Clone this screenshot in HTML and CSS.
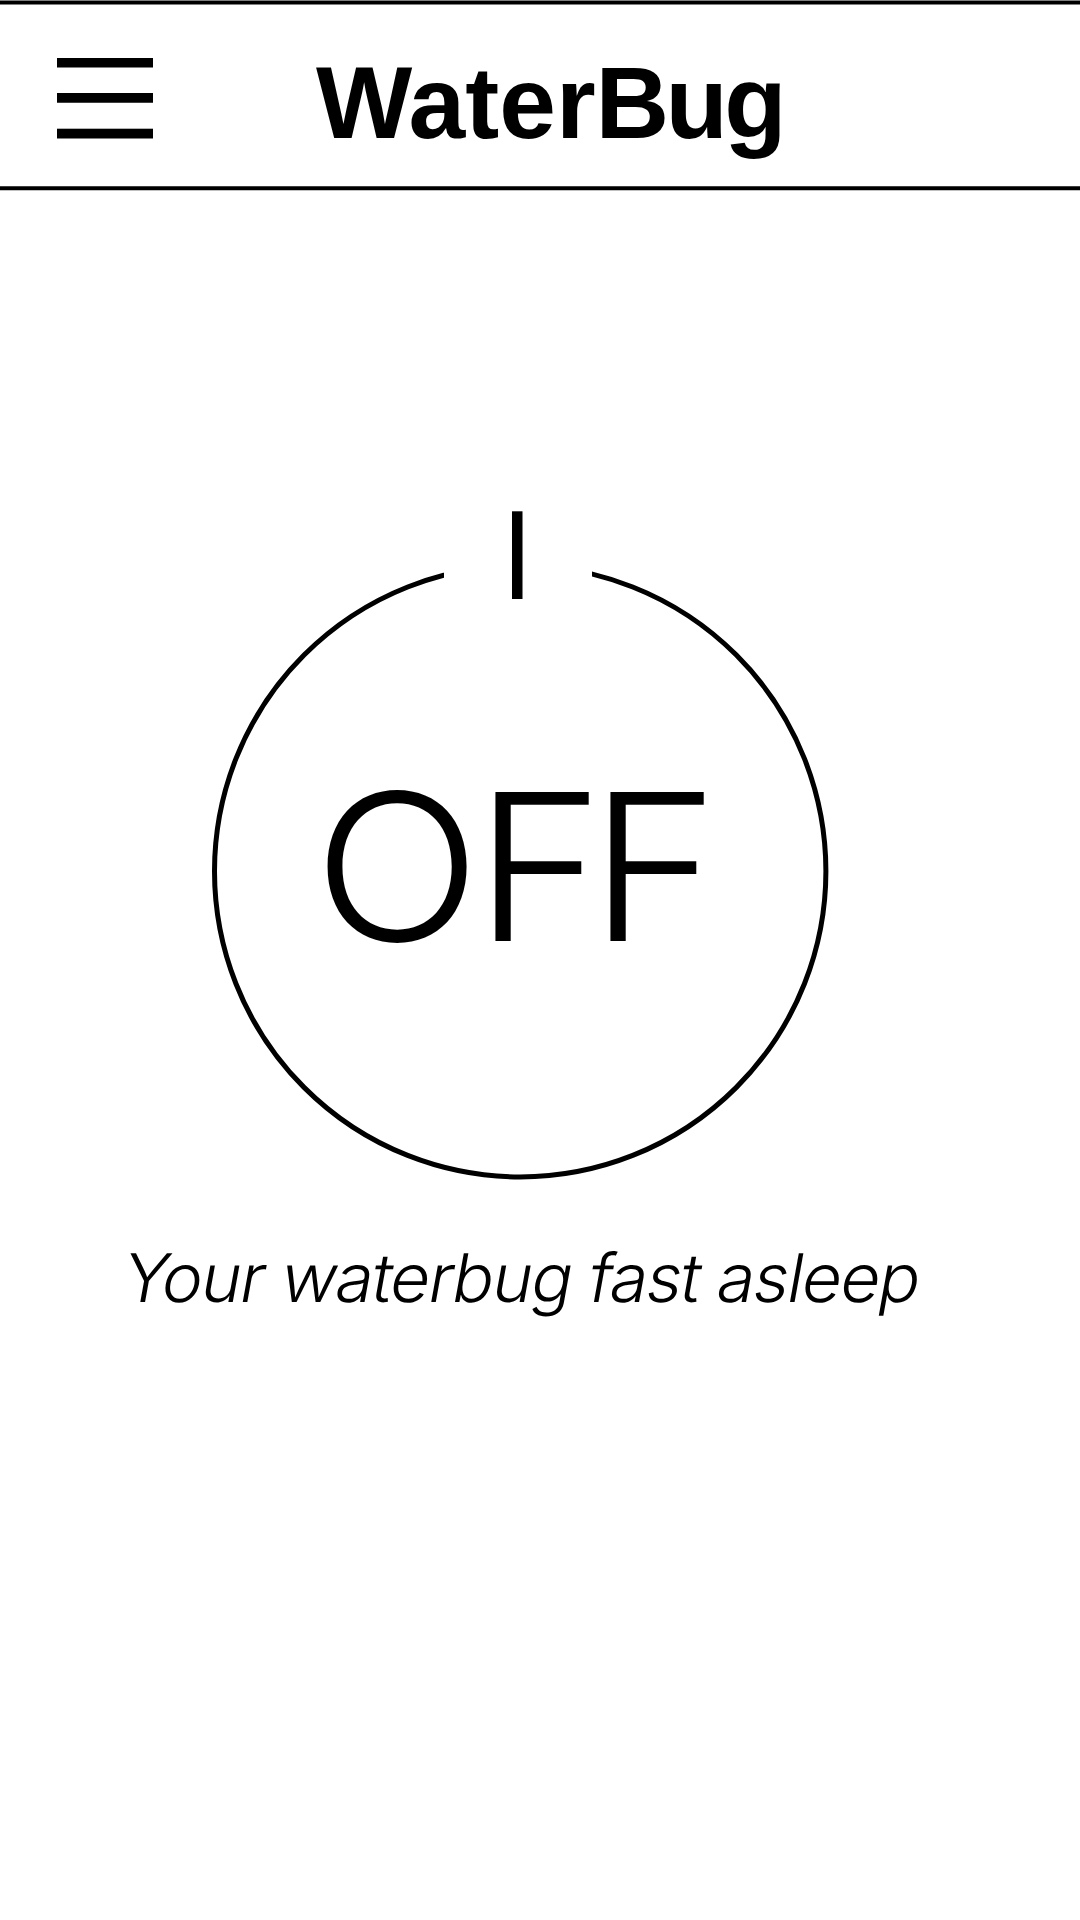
FILE: index.html
```html
<!DOCTYPE html>
<html lang="en">
<head>
<meta charset="utf-8">
<title>WaterBug</title>
<link rel="stylesheet" href="styles.css">
</head>
<body>
<div class="app">
  <svg class="rule" viewBox="0 0 1080 5"><rect y="0.5" width="1080" height="4"/></svg>
  <header class="header">
    <svg class="menu" viewBox="0 0 96 81" role="img" aria-label="Menu">
      <rect y="0" width="96" height="9.5"/>
      <rect y="35" width="96" height="9.75"/>
      <rect y="70.7" width="96" height="9.8"/>
    </svg>
    <h1 class="title">Water<span class="title-end">Bug</span></h1>
  </header>
  <svg class="rule" viewBox="0 0 1080 5"><rect y="0.25" width="1080" height="4"/></svg>
  <main class="content">
    <svg class="power" viewBox="212 511 617 669">
      <clipPath id="gap"><path d="M200 500H444V871H592V500H840V1190H200Z"/></clipPath>
      <circle class="ring" cx="520.2" cy="871.2" r="305.7" clip-path="url(#gap)"/>
      <rect x="512" y="511.3" width="10.5" height="87.7"/>
      <text class="state" transform="translate(313.5 941) scale(1.075 1)" x="0 149.5 256.5">OFF</text>
    </svg>
    <p class="caption">Your waterbug fast asleep</p>
  </main>
</div>
</body>
</html>
```
FILE: styles.css
```css
body {
  margin: 0;
  background: #fff;
  color: #000;
  font-family: "Liberation Sans", Arial, sans-serif;
}

.app {
  display: flex;
  flex-direction: column;
  height: 1920px;
  overflow: hidden;
}

.rule {
  display: block;
  flex: none;
  width: 1080px;
  height: 5px;
}

.header {
  display: flex;
  align-items: flex-start;
  flex: none;
  gap: 163px;
  height: 181px;
  padding-left: 57px;
  box-sizing: border-box;
}

.menu {
  width: 96px;
  height: 81px;
  margin-top: 53px;
}

.title {
  margin: 39px 0 0;
  font-size: 102px;
  line-height: 118px;
  font-weight: 700;
  letter-spacing: 0;
  white-space: nowrap;
}

.title-end {
  letter-spacing: -3.7px;
}

.content {
  display: flex;
  flex-direction: column;
  align-items: flex-start;
  padding-top: 320px;
}

.power {
  display: block;
  width: 617px;
  height: 669px;
  margin-left: 212px;
}

.ring {
  fill: none;
  stroke: #000;
  stroke-width: 5px;
}

.state {
  font-family: Inter, sans-serif;
  font-size: 205px;
  font-weight: 300;
}

.caption {
  margin: 58px 0 0 124px;
  font-family: Inter, sans-serif;
  font-size: 67px;
  line-height: 80px;
  font-weight: 300;
  letter-spacing: -1.5px;
  white-space: nowrap;
  transform: scaleX(1.027) skewX(-10deg);
  transform-origin: left center;
}
```
